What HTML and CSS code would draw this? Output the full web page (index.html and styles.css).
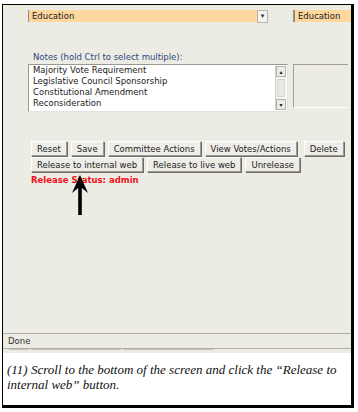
FILE: index.html
```html
<!DOCTYPE html>
<html lang="en">
<head>
    <meta charset="UTF-8">
    <title>Release to internal web</title>
    <link rel="stylesheet" href="styles.css">
</head>
<body>
    <div class="frame">
        <div class="browser">
            <div class="page">
                <div class="row top-row">
                    <div class="select wide">
                        <span>Education</span>
                        <span class="drop">&#9662;</span>
                    </div>
                    <div class="select narrow"><span>Education</span></div>
                </div>

                <div class="label">Notes (hold Ctrl to select multiple):</div>
                <div class="row notes-row">
                    <div class="listbox">
                        <div class="items">
                            <div>Majority Vote Requirement</div>
                            <div>Legislative Council Sponsorship</div>
                            <div>Constitutional Amendment</div>
                            <div>Reconsideration</div>
                        </div>
                        <div class="scroll">
                            <span class="arrow-btn">&#9652;</span>
                            <span class="thumb"></span>
                            <span class="arrow-btn">&#9662;</span>
                        </div>
                    </div>
                    <div class="sidebox"></div>
                </div>

                <div class="buttons first">
                    <button>Reset</button>
                    <button>Save</button>
                    <button>Committee Actions</button>
                    <button>View Votes/Actions</button>
                    <button class="delete">Delete</button>
                </div>
                <div class="buttons">
                    <button>Release to internal web</button>
                    <button>Release to live web</button>
                    <button>Unrelease</button>
                </div>
                <div class="status">Release Status: admin</div>

                <svg class="pointer" width="20" height="40" viewBox="0 0 20 40">
                    <path d="M10 0 L2 18 L8.2 13 L8.2 40 L11.8 40 L11.8 13 L18 18 Z" fill="#000"/>
                </svg>
            </div>
            <div class="statusbar">Done</div>
            <div class="tabs">
                <span></span><span class="long"></span><span class="long"></span>
            </div>
        </div>
        <div class="caption">(11) Scroll to the bottom of the screen and click the &ldquo;Release to internal web&rdquo; button.</div>
    </div>
</body>
</html>
```

FILE: styles.css
```css
body {
    margin: 0;
    background: #fff;
    font-family: "DejaVu Sans", sans-serif;
    font-size: 8.5px;
    color: #1a1a1a;
}
.frame {
    margin: 4px 0 0 2px;
    width: 348px;
    height: 400px;
    border: 1px solid #000;
    border-right-width: 3px;
    border-bottom-width: 3px;
    display: flex;
    flex-direction: column;
}
.browser {
    background: #ecebe4;
    height: 348px;
    display: flex;
    flex-direction: column;
}
.page {
    position: relative;
    flex: 1;
    padding: 5px 0 0 25px;
}
.row {
    display: flex;
}
.select {
    height: 12px;
    background: #fdd79c;
    border-left: 1px solid #8a8a8a;
    display: flex;
    align-items: center;
    padding-left: 3px;
}
.select.wide {
    width: 236px;
}
.select.narrow {
    margin-left: 25px;
    width: 53px;
    border-left: 2px solid #8a8a8a;
}
.drop {
    margin-left: auto;
    width: 9px;
    height: 11px;
    background: #f4f3ef;
    border: 1px solid #b8b6ac;
    font-size: 7px;
    line-height: 11px;
    text-align: center;
    color: #333;
}
.label {
    margin-top: 30px;
    margin-left: 5px;
    color: #2c4a7e;
    line-height: 11px;
}
.notes-row {
    margin-top: 1px;
}
.listbox {
    width: 258px;
    height: 46px;
    background: #fff;
    border: 1px solid #9a988e;
    border-right-color: #e4e2da;
    border-bottom-color: #e4e2da;
    display: flex;
}
.items {
    flex: 1;
    padding: 0 0 0 4px;
    line-height: 11px;
    color: #222;
}
.scroll {
    width: 10px;
    margin: 1px 1px 1px 0;
    display: flex;
    flex-direction: column;
    background: #f6f5f1;
    border-left: 1px solid #cfcdc4;
}
.arrow-btn {
    height: 9px;
    font-size: 6px;
    line-height: 9px;
    text-align: center;
    background: #ecebe4;
    border: 1px solid #b5b3aa;
}
.thumb {
    flex: 1;
    margin: 2px 1px;
    background: #e9e8e2;
    border: 1px solid #d6d4cc;
}
.sidebox {
    margin-left: 5px;
    width: 54px;
    height: 42px;
    border-top: 1px solid #a09e96;
    border-left: 1px solid #a09e96;
    border-bottom: 1px solid #fff;
}
.buttons {
    display: flex;
    gap: 4px;
    margin-left: 3px;
}
.buttons.first {
    margin-top: 29px;
}
button {
    font-family: "DejaVu Sans", sans-serif;
    font-size: 8.5px;
    white-space: nowrap;
    color: #222;
    background: #eeede7;
    height: 15px;
    padding: 0 5px;
    border: 1px solid #fff;
    border-right-color: #9c9a92;
    border-bottom-color: #9c9a92;
    box-shadow: 1px 1px 0 #6e6c66;
    margin-bottom: 1px;
}
.buttons button.delete {
    margin-left: 3px;
}
.status {
    margin: 2px 0 0 3px;
    color: #f0101a;
    font-weight: bold;
    line-height: 11px;
}
.pointer {
    position: absolute;
    left: 67px;
    top: 170px;
}
.statusbar {
    height: 14px;
    border-top: 1px solid #b1afa6;
    border-bottom: 1px solid #b1afa6;
    padding-left: 5px;
    line-height: 14px;
    color: #333;
}
.tabs {
    height: 4px;
    display: flex;
    gap: 2px;
    padding-left: 6px;
}
.tabs span {
    width: 20px;
    border-top: 1px solid #c3c1b8;
}
.tabs span.long {
    width: 90px;
}
.caption {
    flex: 1;
    padding: 9px 4px 0 4px;
    font-family: "Liberation Serif", serif;
    font-style: italic;
    font-size: 13px;
    line-height: 15px;
    color: #111;
}
```
